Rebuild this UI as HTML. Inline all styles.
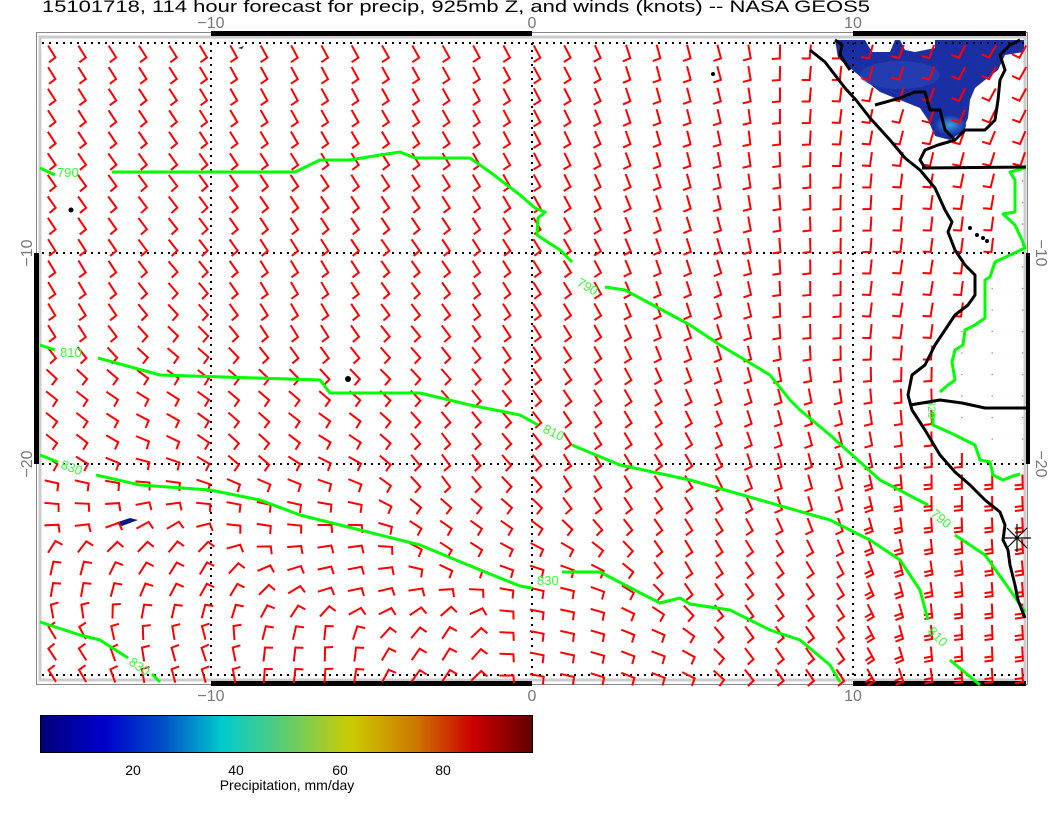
<!DOCTYPE html>
<html><head><meta charset="utf-8"><style>
html,body{margin:0;padding:0;background:#fff;width:1056px;height:816px;overflow:hidden}
svg{display:block}
text{font-family:"Liberation Sans",sans-serif}
</style></head><body>
<svg id="s" width="1056" height="816" viewBox="0 0 1056 816" xmlns="http://www.w3.org/2000/svg">
<defs>
<linearGradient id="cb" x1="0" x2="1" y1="0" y2="0">
<stop offset="0" stop-color="#00007a"/>
<stop offset="0.13" stop-color="#0000cc"/>
<stop offset="0.25" stop-color="#0050c8"/>
<stop offset="0.37" stop-color="#00cccc"/>
<stop offset="0.5" stop-color="#60cc70"/>
<stop offset="0.63" stop-color="#cccc00"/>
<stop offset="0.76" stop-color="#cc7a00"/>
<stop offset="0.88" stop-color="#cc0000"/>
<stop offset="1" stop-color="#600000"/>
</linearGradient>
<radialGradient id="pg" cx="0.5" cy="0.5" r="0.5">
<stop offset="0" stop-color="#3aa0e0"/><stop offset="1" stop-color="#1630a8"/>
</radialGradient>
</defs>
<text x="42" y="12" font-size="17" textLength="828" lengthAdjust="spacingAndGlyphs">15101718, 114 hour forecast for precip, 925mb Z, and winds (knots) -- NASA GEOS5</text>
<rect x="36.5" y="32.5" width="991" height="652" fill="none" stroke="#888" stroke-width="1"/>
<rect x="40" y="37" width="985" height="643" fill="none" stroke="#ccc" stroke-width="3"/>
<path d="M835,40 L1024,40 L1024,52 L1005,55 L998,70 L985,80 L975,88 L970,100 L968,118 L962,132 L950,140 L935,136 L928,120 L920,108 L900,100 L880,92 L862,78 L850,68 L838,58 Z" fill="#1b2fa5"/>
<path d="M865,40 L895,40 L890,52 L872,52 Z" fill="#fff"/>
<path d="M900,40 L935,40 L935,48 L915,52 L905,50 Z" fill="#fff"/>
<ellipse cx="950" cy="125" rx="16" ry="10" fill="url(#pg)"/>
<ellipse cx="900" cy="75" rx="40" ry="14" fill="#2a48b8" opacity="0.6"/>
<path d="M115,523 L130,518 L138,520 L122,526 Z" fill="#0a1a80"/>
<path d="M238,48 L244,46 L242,49 Z" fill="#0a1a80"/>
<g stroke="#000" stroke-width="2" stroke-dasharray="2,5" fill="none">
<line x1="42" y1="43" x2="1024" y2="43"/>
<line x1="42" y1="253" x2="1024" y2="253"/>
<line x1="42" y1="464" x2="1024" y2="464"/>
<line x1="42" y1="675" x2="1024" y2="675"/>
<line x1="211" y1="43" x2="211" y2="675"/>
<line x1="532" y1="43" x2="532" y2="675"/>
<line x1="853" y1="43" x2="853" y2="675"/>
</g>
<g fill="#000">
<rect x="211" y="31" width="321" height="5"/>
<rect x="853" y="31" width="173" height="5"/>
<rect x="211" y="681" width="321" height="5"/>
<rect x="853" y="681" width="173" height="5"/>
<rect x="34" y="253" width="5" height="211"/>
<rect x="1026" y="253" width="4" height="211"/>
</g>
<g id="barbs" stroke="#f00" stroke-width="2" fill="none" stroke-linecap="square"></g>
<g stroke="#0f0" stroke-width="3" fill="none" stroke-linejoin="round">
<polyline points="40,168 55,175"/>
<polyline points="112,172 295,172 320,160 350,160 380,155 400,152 415,158 470,158 490,172 520,195 535,208 545,212 538,218 537,235 560,250 572,262"/>
<polyline points="605,287 625,290 690,325 720,345 770,375 790,400 800,410 830,435 860,462 880,480 928,505"/>
<polyline points="955,535 985,555 1010,590 1025,612"/>
<polyline points="40,345 55,350"/>
<polyline points="98,358 160,375 320,380 330,393 420,393 470,405 520,415 538,425"/>
<polyline points="572,445 620,465 690,480 760,500 830,520 870,540 900,560 920,590 928,620"/>
<polyline points="950,660 980,685"/>
<polyline points="40,455 58,462"/>
<polyline points="96,475 140,485 210,490 260,500 300,515 360,530 420,545 480,570 520,586 532,588"/>
<polyline points="562,572 582,572 600,572 625,585 660,603 680,598 690,604 730,610 770,630 800,640 830,665 840,682"/>
<polyline points="40,622 80,635 100,640 128,658"/>
<polyline points="152,674 160,682"/>
<polyline points="1025,168 1010,172 1015,180 1015,212 1003,214 1015,225 1022,240 1025,248 995,262 990,277 985,280 985,318 975,325 965,330 963,345 955,350 952,362 955,380 948,385 940,392"/>
<polyline points="933,412 933,425 955,435 975,445 980,460 990,462 993,475 1003,480 1013,476 1020,474"/>
</g>
<g fill="#3f3" font-size="13">
<text x="57" y="177">790</text>
<text x="576" y="285" transform="rotate(30 576 285)">790</text>
<text x="930" y="515" transform="rotate(40 930 515)">790</text>
<text x="60" y="357">810</text>
<text x="542" y="432" transform="rotate(25 542 432)">810</text>
<text x="927" y="632" transform="rotate(45 927 632)">810</text>
<text x="60" y="468" transform="rotate(20 60 468)">830</text>
<text x="537" y="585">830</text>
<text x="128" y="664" transform="rotate(35 128 664)">830</text>
<text x="928" y="400" transform="rotate(90 928 400)" font-size="11">820</text>
</g>
<g stroke="#000" stroke-width="3" fill="none" stroke-linejoin="round">
<polyline points="810,50 825,62 835,75 845,88 856,100 870,118 890,140 905,158 920,170 935,188 945,210 952,222 948,232 955,250 965,265 975,275 975,295 968,305 955,315 945,330 935,345 925,365 912,375 908,395 912,410 925,430 940,455 955,472 970,485 985,500 1000,512 1005,525 1003,540 1008,550 1010,565 1015,585 1018,600 1025,618"/>
<polyline points="922,168 1026,167"/>
<polyline points="910,405 940,400 962,403 985,408 1026,408"/>
<polyline points="835,40 842,45 840,55 850,70"/>
<polyline points="875,105 900,98 915,92 925,92 930,110 940,110 945,130 955,140 965,130 985,130 995,120 998,100 1000,80 1005,70 1000,55 1010,45 1020,40"/>
<polyline points="955,140 938,145 925,150 920,160 925,168"/>
</g>
<g fill="#000">
<circle cx="71" cy="210" r="2.5"/><circle cx="348" cy="379" r="3"/><circle cx="713" cy="74" r="2"/>
<circle cx="970" cy="228" r="2"/><circle cx="977" cy="235" r="2"/><circle cx="983" cy="238" r="2"/><circle cx="987" cy="241" r="2"/>
</g>
<g stroke="#000" stroke-width="1.2">
<line x1="1017" y1="524" x2="1017" y2="552"/><line x1="1003" y1="538" x2="1031" y2="538"/>
<line x1="1007" y1="528" x2="1027" y2="548"/><line x1="1007" y1="548" x2="1027" y2="528"/>
</g>
<g fill="#777" font-size="16" text-anchor="middle">
<text x="211" y="28">−10</text><text x="532" y="28">0</text><text x="853" y="28">10</text>
<text x="211" y="701">−10</text><text x="532" y="701">0</text><text x="853" y="701">10</text>
<text transform="translate(32,253) rotate(-90)">−10</text>
<text transform="translate(32,464) rotate(-90)">−20</text>
<text transform="translate(1036,253) rotate(90)">−10</text>
<text transform="translate(1036,464) rotate(90)">−20</text>
</g>
<rect x="40.5" y="715.5" width="492" height="37" fill="url(#cb)" stroke="#000"/>
<g fill="#000" font-size="14" text-anchor="middle">
<text x="133" y="775">20</text><text x="236" y="775">40</text><text x="340" y="775">60</text><text x="443" y="775">80</text>
<text x="287" y="790">Precipitation, mm/day</text>
</g>
</svg>
<script>
(function(){
var P=[[60,60,58],[300,60,62],[530,60,62],[700,60,75],[830,60,95],[900,60,110],[1000,60,120],
[60,300,60],[300,300,60],[530,300,58],[700,300,72],[820,300,90],[900,300,100],
[60,440,40],[250,450,45],[450,470,55],[600,470,60],[800,470,75],[960,480,90],
[60,510,5],[250,510,10],[450,530,35],[700,560,60],
[60,570,-80],[200,580,-60],[350,580,-10],[560,620,12],[750,600,55],
[60,650,-125],[200,650,-110],[330,650,-90],[450,650,-60],[540,650,12],[650,660,20],[800,660,55],[980,640,88]];
function ang(x,y){var sx=0,sy=0;for(var i=0;i<P.length;i++){var dx=x-P[i][0],dy=y-P[i][1];var w=1/Math.pow(dx*dx+dy*dy+400,1.5);var a=P[i][2]*Math.PI/180;sx+=w*Math.cos(a);sy+=w*Math.sin(a);}return Math.atan2(sy,sx);}
function land(x,y){
 if(y>170&&y<480){var bx= y<250?1012:(y<330?985:(y<400?955:(y<440?940:980)));return x>bx;}
 return false;}
var g=document.getElementById('barbs'),h='';
for(var j=0;j<30;j++){var y=52+j*21.5;for(var i=0;i<33;i++){var x=52+i*30.33;
 if(land(x,y)){h+='<circle cx="'+x.toFixed(1)+'" cy="'+y.toFixed(1)+'" r="0.8" fill="#f66" stroke="none"/>';continue;}
 var a=ang(x,y),L=13,T=7,c=Math.cos(a),s=Math.sin(a);
 var hx=x-c*L/2,hy=y-s*L/2,ex=x+c*L/2,ey=y+s*L/2;
 var b=a+85*Math.PI/180;var tx=ex+Math.cos(b)*T,ty=ey+Math.sin(b)*T;
 var d='M'+hx.toFixed(1)+','+hy.toFixed(1)+'L'+ex.toFixed(1)+','+ey.toFixed(1)+'L'+tx.toFixed(1)+','+ty.toFixed(1);
 if(x>870&&y>470){var mx=ex-c*4,my=ey-s*4;d+='M'+mx.toFixed(1)+','+my.toFixed(1)+'l'+(Math.cos(b)*T).toFixed(1)+','+(Math.sin(b)*T).toFixed(1);}
 h+='<path d="'+d+'"/>';}}
g.innerHTML=h;
})();
</script>
</body></html>
